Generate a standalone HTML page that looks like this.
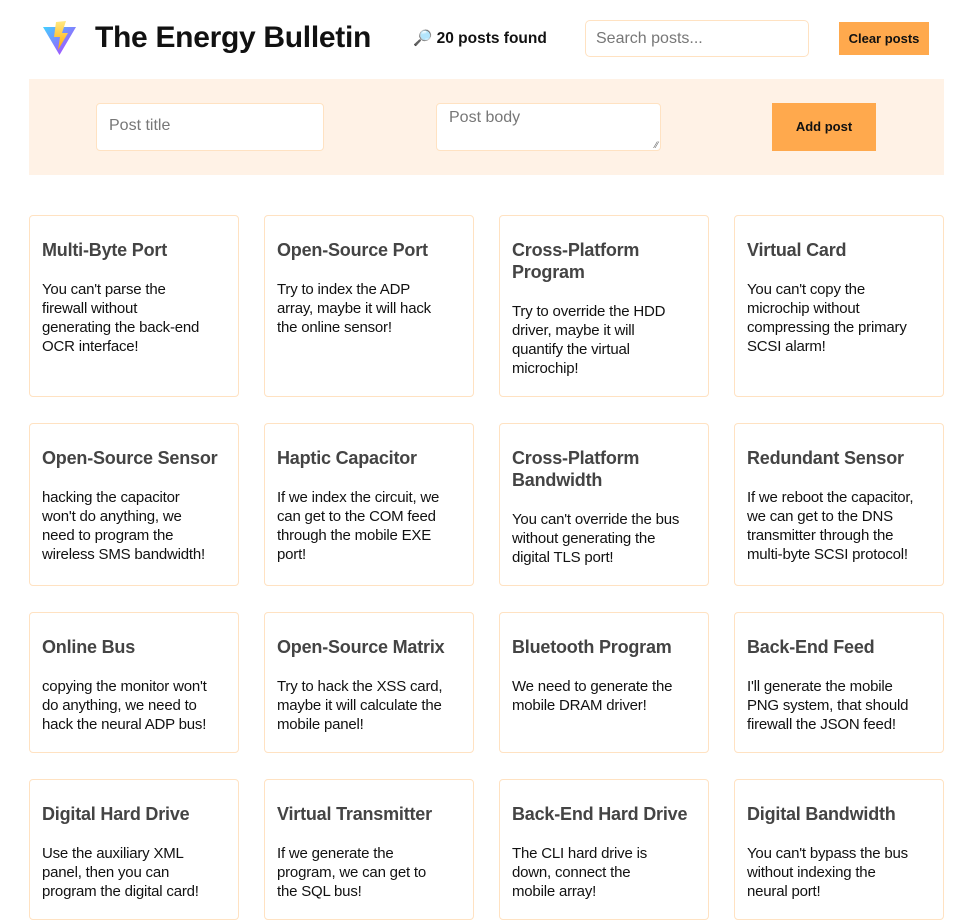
<!DOCTYPE html>
<html><head><meta charset="utf-8"><style>
*{box-sizing:border-box}
html,body{margin:0;padding:0;width:977px;height:867px;overflow:hidden;background:#fff;font-family:"Liberation Sans",Roboto,sans-serif;color:#111}
.hdr{position:relative;height:79px}
.logo{position:absolute;left:42px;top:20px}
.title{position:absolute;left:95px;top:18px;font-size:30px;font-weight:bold;letter-spacing:-0.3px;margin:0;line-height:40px}
.found{position:absolute;left:413px;top:29px;font-size:15.5px;font-weight:bold}
.search{position:absolute;left:585px;top:20px;width:224px;height:37px;border:1px solid #ffe2c2;border-radius:5px;padding:0 10px;font-size:16px;color:#777;line-height:35px}
.clear{position:absolute;left:839px;top:22px;width:90px;height:33px;background:#ffa94d;font-size:13px;font-weight:bold;text-align:center;line-height:33px}
.band{position:absolute;left:29px;top:79px;width:915px;height:96px;background:#fff2e6}
.inp{position:absolute;background:#fff;border:1px solid #ffe2c2;border-radius:4px;color:#777;font-size:16px}
.add{position:absolute;left:743px;top:24px;width:104px;height:48px;background:#ffa94d;font-size:13px;font-weight:bold;text-align:center;line-height:48px}
.grid{position:absolute;left:29px;top:215px;width:915px;display:grid;grid-template-columns:repeat(4,210px);column-gap:25px;row-gap:26px}
.card{border:1px solid #ffe2c2;border-radius:4px;padding:12px}
.card h2{margin:11px 0 19px;font-size:18px;line-height:22px;color:#444;font-weight:bold;letter-spacing:-0.2px}
.card p{margin:0 0 6px;font-size:15px;line-height:19px;color:#111;white-space:nowrap;letter-spacing:-0.2px}
</style></head><body>
<div class="hdr">
<svg class="logo" width="35" height="36" viewBox="0 0 35 36"><defs><linearGradient id="g" x1="0" y1="0" x2="1" y2="1"><stop offset="0" stop-color="#41d1ff"/><stop offset="1" stop-color="#bd34fe"/></linearGradient><linearGradient id="y" x1="0" y1="0" x2="0" y2="1"><stop offset="0" stop-color="#ffea83"/><stop offset="1" stop-color="#ffa800"/></linearGradient></defs><path d="M1 7 L34 7 L17.5 35 Z" fill="url(#g)"/><path d="M14 2 L24 1 L20 13 L26 13 L16 30 L18 17 L12 17 Z" fill="url(#y)"/></svg>
<h1 class="title">The Energy Bulletin</h1>
<div class="found">🔎 20 posts found</div>
<div class="search">Search posts...</div>
<div class="clear">Clear posts</div>
</div>
<div class="band">
<div class="inp" style="left:67px;top:24px;width:228px;height:48px;padding:13px 12px">Post title</div>
<div class="inp" style="left:407px;top:24px;width:225px;height:48px;padding:5px 12px">Post body<span style="position:absolute;right:2px;bottom:0;font-size:9px;color:#666">⁄⁄</span></div>
<div class="add">Add post</div>
</div>
<div class="grid">
<div class="card"><h2>Multi-Byte Port</h2><p>You can't parse the<br>firewall without<br>generating the back-end<br>OCR interface!</p></div>
<div class="card"><h2>Open-Source Port</h2><p>Try to index the ADP<br>array, maybe it will hack<br>the online sensor!</p></div>
<div class="card"><h2>Cross-Platform<br>Program</h2><p>Try to override the HDD<br>driver, maybe it will<br>quantify the virtual<br>microchip!</p></div>
<div class="card"><h2>Virtual Card</h2><p>You can't copy the<br>microchip without<br>compressing the primary<br>SCSI alarm!</p></div>
<div class="card"><h2>Open-Source Sensor</h2><p>hacking the capacitor<br>won't do anything, we<br>need to program the<br>wireless SMS bandwidth!</p></div>
<div class="card"><h2>Haptic Capacitor</h2><p>If we index the circuit, we<br>can get to the COM feed<br>through the mobile EXE<br>port!</p></div>
<div class="card"><h2>Cross-Platform<br>Bandwidth</h2><p>You can't override the bus<br>without generating the<br>digital TLS port!</p></div>
<div class="card"><h2>Redundant Sensor</h2><p>If we reboot the capacitor,<br>we can get to the DNS<br>transmitter through the<br>multi-byte SCSI protocol!</p></div>
<div class="card"><h2>Online Bus</h2><p>copying the monitor won't<br>do anything, we need to<br>hack the neural ADP bus!</p></div>
<div class="card"><h2>Open-Source Matrix</h2><p>Try to hack the XSS card,<br>maybe it will calculate the<br>mobile panel!</p></div>
<div class="card"><h2>Bluetooth Program</h2><p>We need to generate the<br>mobile DRAM driver!</p></div>
<div class="card"><h2>Back-End Feed</h2><p>I'll generate the mobile<br>PNG system, that should<br>firewall the JSON feed!</p></div>
<div class="card"><h2>Digital Hard Drive</h2><p>Use the auxiliary XML<br>panel, then you can<br>program the digital card!</p></div>
<div class="card"><h2>Virtual Transmitter</h2><p>If we generate the<br>program, we can get to<br>the SQL bus!</p></div>
<div class="card"><h2>Back-End Hard Drive</h2><p>The CLI hard drive is<br>down, connect the<br>mobile array!</p></div>
<div class="card"><h2>Digital Bandwidth</h2><p>You can't bypass the bus<br>without indexing the<br>neural port!</p></div>
</div>
</body></html>
